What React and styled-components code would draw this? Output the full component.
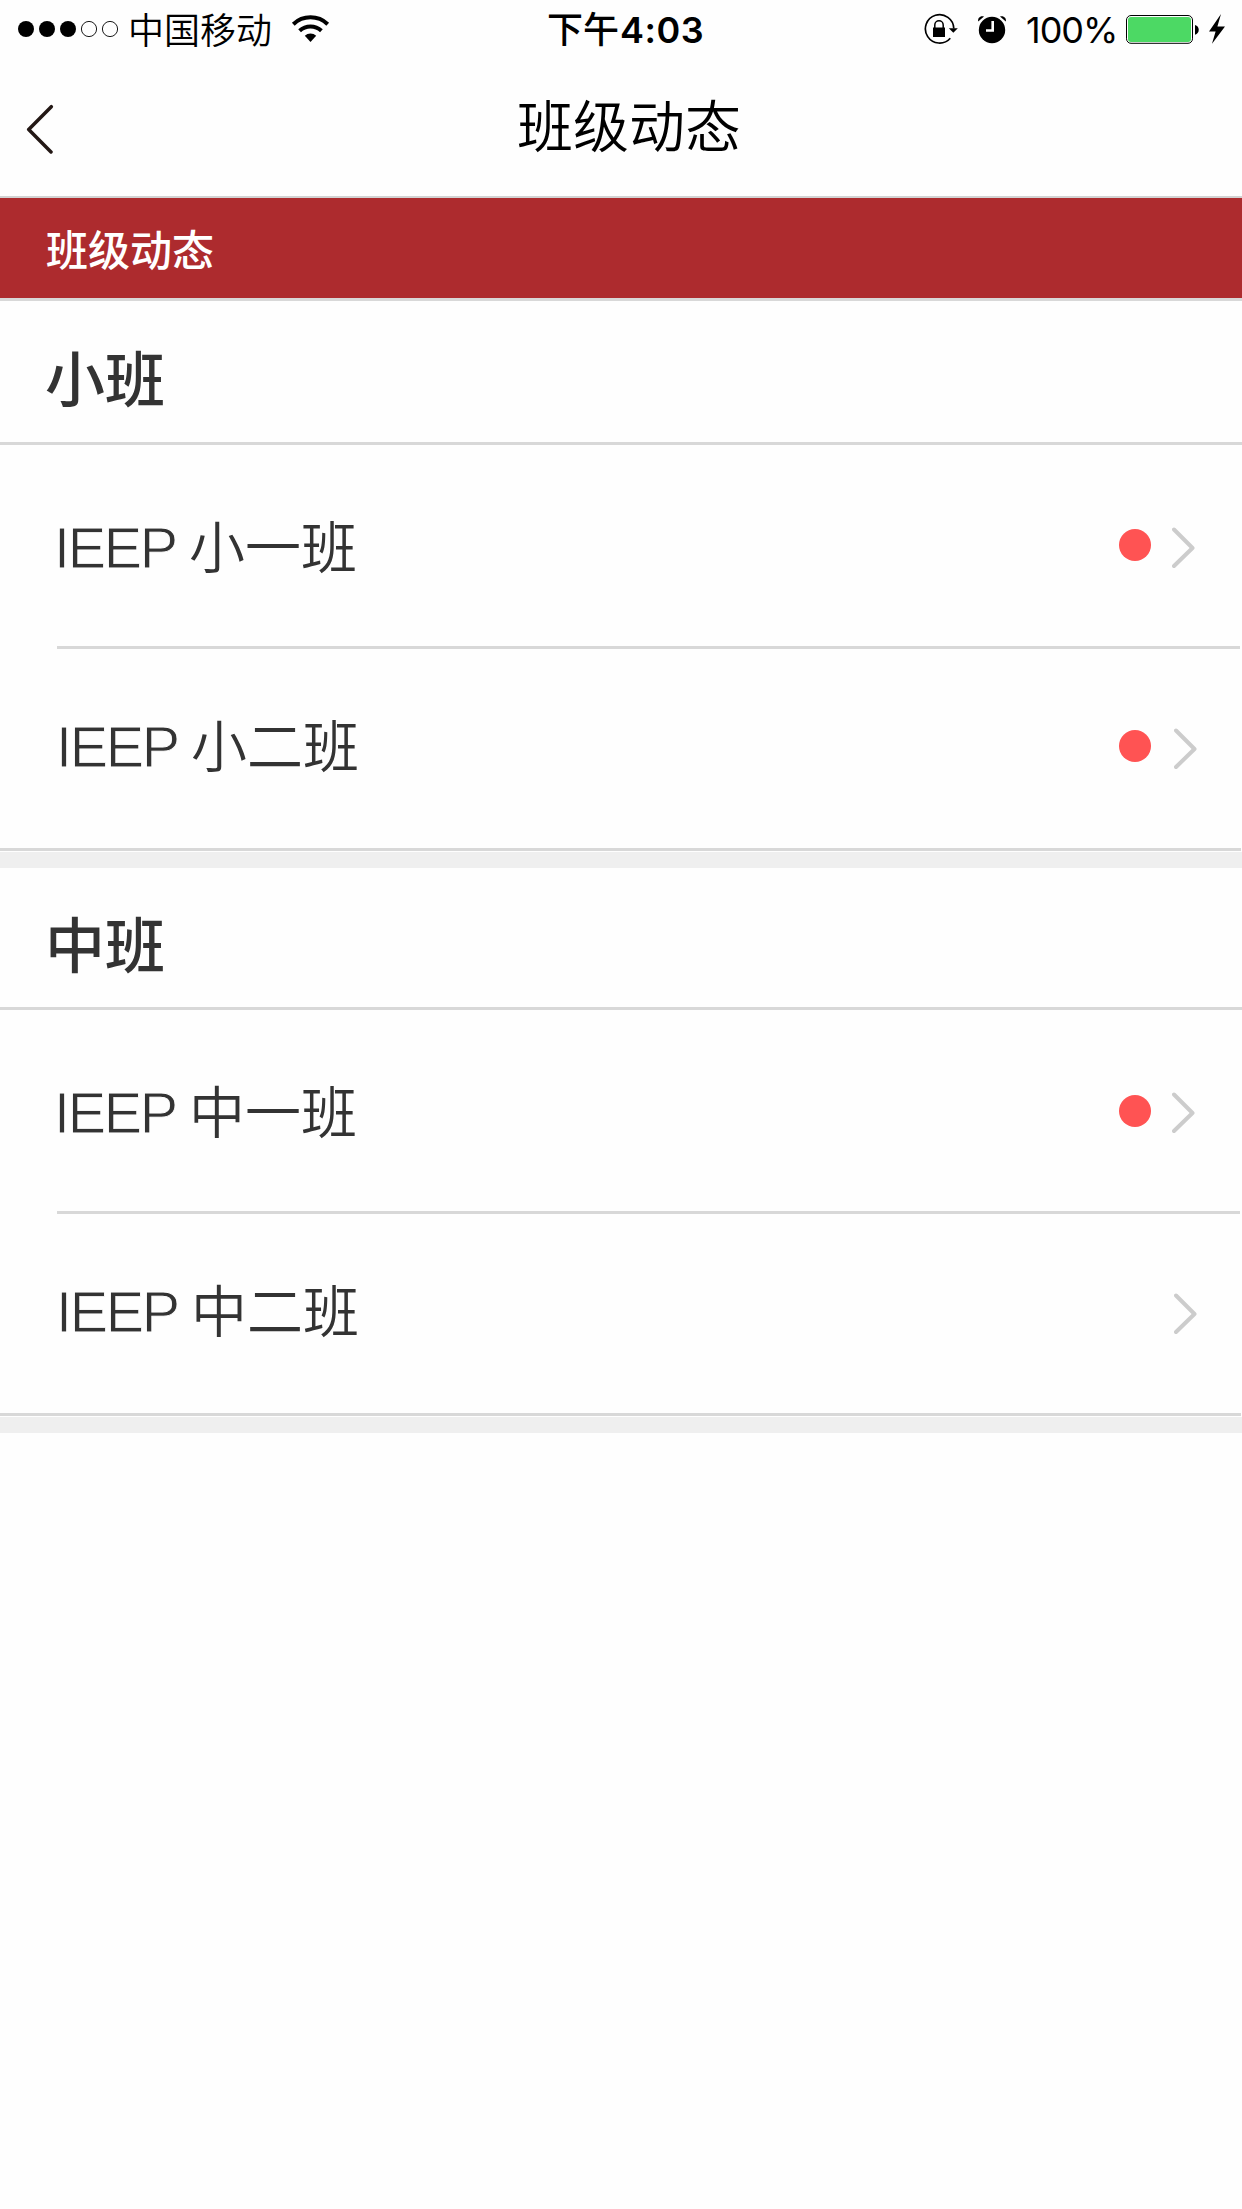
import React from "react";
import styled, { createGlobalStyle } from "styled-components";

const GlobalStyle = createGlobalStyle`
  * { box-sizing: border-box; }
  html, body { margin: 0; padding: 0; background: #fefefe; }
  body { font-family: Inter, "Noto Sans CJK SC", sans-serif; color: #333; }
`;

const Screen = styled.div`
  width: 1242px;
  min-height: 2209px;
  background: #fefefe;
`;

const StatusBar = styled.div`
  display: grid;
  grid-template-columns: 547px 1fr 324px;
  height: 60px;
  color: #000;
  font-size: 36px;
  line-height: 56px;
  white-space: nowrap;
`;

const StatusLeft = styled.div`
  display: flex;
  align-items: flex-start;
  padding-left: 18px;
`;

const Carrier = styled.span`
  margin-left: 10px;
  padding-top: 3px;
  font-weight: 350;
`;

const Time = styled.div`
  display: flex;
  padding-top: 2px;
  font-weight: 500;
`;

const Clock = styled.span`
  font-weight: 560;
  letter-spacing: 0.5px;
  padding-left: 1px;
`;

const StatusRight = styled.div`
  display: flex;
  align-items: flex-start;
  padding-left: 6px;
`;

const Percent = styled.span`
  width: 100px;
  padding-top: 2px;
  letter-spacing: -1px;
`;

const Glyph = styled.svg`
  display: block;
  flex: none;
  margin-left: ${(p) => p.$gap || 0}px;
`;

const NavBar = styled.header`
  display: grid;
  grid-template-columns: 517px 1fr;
  height: 138px;
  border-bottom: 2px solid #d2d2d2;
`;

const BackButton = styled.button`
  display: flex;
  align-items: flex-start;
  padding: 44px 0 0 26px;
  border: 0;
  background: none;
`;

const Title = styled.h1`
  margin: 0;
  padding-top: 27px;
  color: #000;
  font-size: 56px;
  line-height: 80px;
  font-weight: 350;
`;

const Banner = styled.div`
  height: 103px;
  padding: 4px 0 0 46px;
  border-bottom: 3px solid #d8d8d8;
  background: #ad2b2e;
  color: #fff;
  font-size: 42px;
  font-weight: 500;
  line-height: 98px;
`;

const Section = styled.section`
  border-bottom: 16px solid #efefef;
`;

const SectionTitle = styled.h2`
  height: ${(p) => p.$height}px;
  margin: 0;
  padding: 13px 0 0 45px;
  border-bottom: 3px solid #d8d8d8;
  font-size: 60px;
  font-weight: 500;
  line-height: ${(p) => p.$height - 11}px;
`;

const Row = styled.div`
  display: flex;
  align-items: center;
  height: ${(p) => (p.$last ? 202 : 204)}px;
  margin: ${(p) => (p.$last ? "0 1px 1px 0" : "0 2px 0 57px")};
  padding-left: ${(p) => (p.$last ? 57 : 0)}px;
  padding-right: ${(p) => (p.$last ? 43 : 44)}px;
  border-bottom: 3px solid #d8d8d8;
`;

const Name = styled.span`
  flex: 1;
  display: flex;
  align-items: baseline;
  font-size: 56px;
  font-weight: 350;
  line-height: 80px;
  white-space: pre;
  padding-left: ${(p) => (p.$last ? 2 : 0)}px;
  padding-top: ${(p) => (p.$last ? 0 : 5)}px;
  padding-bottom: ${(p) => (p.$last ? 3 : 0)}px;
`;

const Program = styled.span`
  width: 135px;
  margin-left: -3px;
  font-family: "Liberation Sans", Arial, sans-serif;
  font-size: 57.5px;
  letter-spacing: -2.3px;
  -webkit-text-stroke: 0.9px #fefefe;
`;

const Unread = styled.span`
  width: 32px;
  height: 32px;
  border-radius: 50%;
  background: #ff5353;
  margin-right: ${(p) => (p.$last ? 23 : 21)}px;
  margin-bottom: ${(p) => p.$lift}px;
`;

const Arrow = styled.svg`
  display: block;
  flex: none;
  margin-top: ${(p) => (p.$last ? 0 : 4)}px;
`;

const sections = [
  {
    title: "小班",
    height: 144,
    rows: [
      { name: "小一班", unread: true, lift: 1 },
      { name: "小二班", unread: true, lift: 5 },
    ],
  },
  {
    title: "中班",
    height: 142,
    rows: [
      { name: "中一班", unread: true, lift: -1 },
      { name: "中二班", unread: false },
    ],
  },
];

function Signal() {
  return (
    <Glyph width="100" height="60" viewBox="18 0 100 60">
      {[26, 47, 68].map((x) => <circle key={x} cx={x} cy="29" r="8" />)}
      {[89, 110].map((x) => (
        <circle key={x} cx={x} cy="29" r="7.6" fill="none" stroke="#000" strokeWidth="0.9" />
      ))}
    </Glyph>
  );
}

function Wifi() {
  return (
    <Glyph $gap={18} width="40" height="60" viewBox="290 0 40 60">
      <g fill="none" stroke="#000" strokeWidth="4">
        <path d="M293.3 24.2A25 25 0 0 1 327.7 24.2" />
        <path d="M299.6 30.8A16 16 0 0 1 321.4 30.8" />
      </g>
      <path d="M304.8 35.8A8.5 8.5 0 0 1 316.2 35.8L310.5 42Z" />
    </Glyph>
  );
}

function StatusIcons() {
  return (
    <Glyph width="102" height="60" viewBox="924 0 102 60">
      <path d="M953.8 28.5A14.2 14.2 0 1 0 950.3 38.2" fill="none" stroke="#000" strokeWidth="1.7" />
      <path d="M948.8 28.3H957.8L953.3 32.8Z" />
      <rect x="933" y="27.5" width="12" height="9.5" />
      <path d="M934.8 28V25a4.2 4.2 0 0 1 8.4 0V28" fill="none" stroke="#000" strokeWidth="1.5" />
      <circle cx="992" cy="30" r="13.2" />
      <path d="M978.2 21.5C977.4 18 980.5 15.2 984 16.5Z" />
      <path d="M1005.8 21.5C1006.6 18 1003.5 15.2 1000 16.5Z" />
      <path d="M992.7 21V30.5H986" fill="none" stroke="#fff" strokeWidth="2.6" />
    </Glyph>
  );
}

function Battery() {
  return (
    <Glyph width="104" height="60" viewBox="1126 0 104 60">
      <rect x="1126.5" y="15.5" width="66" height="27.8" rx="4.5" fill="none" stroke="#000" strokeWidth="1" />
      <rect x="1128" y="17" width="63" height="25" rx="3" fill="#4cd964" />
      <path d="M1195 25C1200 26 1200 33.5 1195 34.8Z" />
      <path d="M1221 14L1209 31.5H1215.6L1212 43.8L1225 26.5H1217.4Z" />
    </Glyph>
  );
}

function Chevron({ last }) {
  return (
    <Arrow $last={last} width="24" height="42" viewBox="0 0 24 42">
      <path d="M2 2.5L20.5 21L2 39" fill="none" stroke="#ccc" strokeWidth="4" strokeLinecap="round" strokeLinejoin="round" />
    </Arrow>
  );
}

export default function App() {
  return (
    <Screen>
      <GlobalStyle />
      <StatusBar>
        <StatusLeft>
          <Signal />
          <Carrier>中国移动</Carrier>
          <Wifi />
        </StatusLeft>
        <Time>
          下午<Clock>4:03</Clock>
        </Time>
        <StatusRight>
          <StatusIcons />
          <Percent>100%</Percent>
          <Battery />
        </StatusRight>
      </StatusBar>
      <NavBar>
        <BackButton aria-label="返回">
          <Glyph width="28" height="50" viewBox="26 104 28 50">
            <path d="M51.3 106.7L28.7 129.5L51 152" fill="none" stroke="#231815" strokeWidth="3.5" strokeLinecap="round" strokeLinejoin="round" />
          </Glyph>
        </BackButton>
        <Title>班级动态</Title>
      </NavBar>
      <Banner>班级动态</Banner>
      {sections.map((section) => (
        <Section key={section.title}>
          <SectionTitle $height={section.height}>{section.title}</SectionTitle>
          {section.rows.map((row, i) => {
            const last = i === section.rows.length - 1;
            return (
              <Row key={row.name} $last={last}>
                <Name $last={last}>
                  <Program>IEEP </Program>
                  {row.name}
                </Name>
                {row.unread && <Unread $last={last} $lift={row.lift} />}
                <Chevron last={last} />
              </Row>
            );
          })}
        </Section>
      ))}
    </Screen>
  );
}
